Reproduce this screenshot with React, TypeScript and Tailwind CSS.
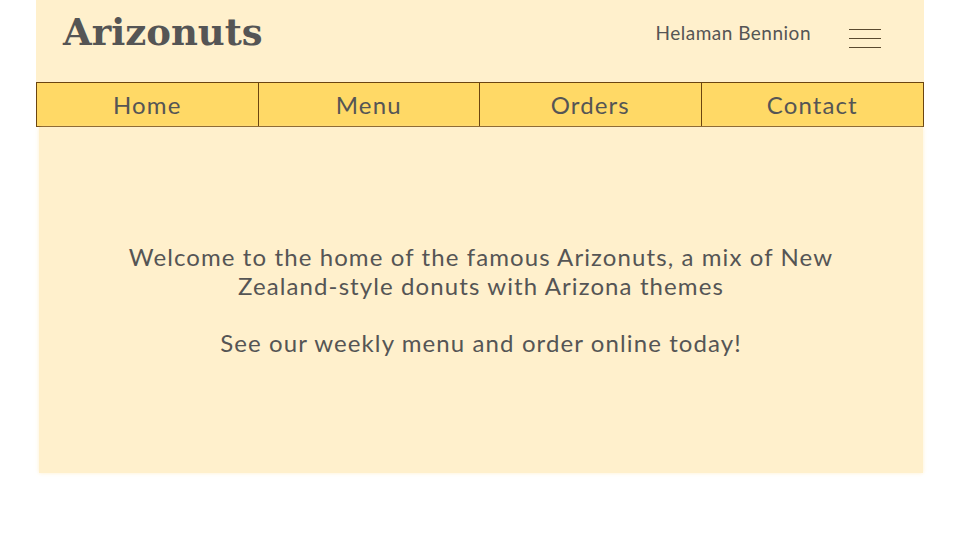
import React from "react";

export default function App() {
  const items = ["Home", "Menu", "Orders", "Contact"];
  return (
    <div className="w-[960px] h-[540px] bg-white overflow-hidden" style={{ fontFamily: "Lato, 'Open Sans', sans-serif" }}>
      <div className="mx-[36px] w-[888px]">
        <header className="h-[82px] bg-[#fff0cc] flex items-center justify-between pl-[27px] pr-[43px]">
          <h1 className="text-[37px] font-bold text-[#555] leading-none -mt-[18px]" style={{ fontFamily: "'DejaVu Serif', serif" }}>
            Arizonuts
          </h1>
          <div className="flex items-center gap-[38px] -mt-[16px]">
            <span className="text-[19px] tracking-[0.5px] text-[#555]">Helaman Bennion</span>
            <div className="flex flex-col gap-[8px] w-[32px] mt-[10px]">
              <div className="h-px bg-[#5a4a30]" />
              <div className="h-px bg-[#5a4a30]" />
              <div className="h-px bg-[#5a4a30]" />
            </div>
          </div>
        </header>
        <nav className="grid grid-cols-4 h-[45px] bg-[#ffd966] border border-[#6b4510]">
          {items.map((it, i) => (
            <div
              key={it}
              className={`flex items-center justify-center text-[24px] tracking-[1.1px] text-[#555] ${i < 3 ? "border-r border-[#6b4510]" : ""}`}
            >
              {it}
            </div>
          ))}
        </nav>
        <main className="ml-[3px] mr-[1px] h-[346px] bg-[#fff0cc] shadow-[0_0_4px_rgba(255,230,170,0.6)] flex flex-col items-center justify-center text-center text-[24px] tracking-[1.1px] leading-[29px] text-[#555] pb-[2px]">
          <p className="w-[760px]">
            Welcome to the home of the famous Arizonuts, a mix of New Zealand-style donuts with Arizona themes
          </p>
          <p className="mt-[28px]">See our weekly menu and order online today!</p>
        </main>
      </div>
    </div>
  );
}
